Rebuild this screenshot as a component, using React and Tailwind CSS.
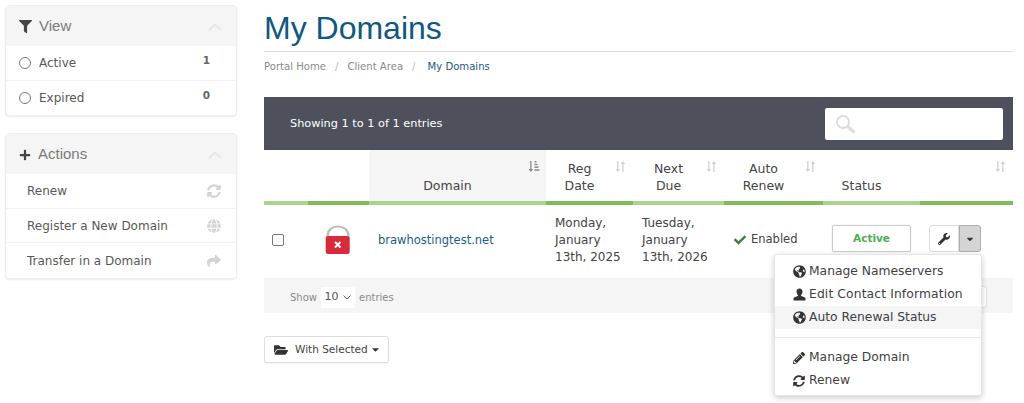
import React from "react";
import { FaFilter, FaPlus, FaSyncAlt, FaGlobe, FaShare, FaPencilAlt, FaWrench, FaCheck, FaFolderOpen, FaGlobeAmericas, FaCaretDown } from "react-icons/fa";

const Chevron = () => (
  <svg width="14" height="8" viewBox="0 0 14 8" fill="none" stroke="#e6e6e6" strokeWidth="2" className="shrink-0">
    <path d="M1 7l6-5.500L13 7" />
  </svg>
);

const SortIcon = ({ active }) => (
  <svg width="12" height="13" viewBox="0 0 12 12" fill={active ? "#8a8a8a" : "#d2d2d2"}>
    <path d="M2.200 0.500h1.300v8h1.700L2.850 11.500 0.500 8.500h1.700z" />
    {active ? (
      <path d="M6.500 0.500h2v1.500h-2zM6.500 3.200h3v1.500h-3zM6.500 6h4v1.500h-4zM6.500 8.800h5v1.500h-5z" />
    ) : (
      <path d="M8.500 11.500h-1.300v-8H5.500L7.850 0.500 10.200 3.500H8.500z" />
    )}
  </svg>
);

const Lock = () => (
  <svg width="26" height="30" viewBox="0 0 26 30">
    <path d="M2.500 13V11C2.500 4.800 7.500 1.500 13 1.500S23.500 4.800 23.500 11V13" fill="none" stroke="#bdbdbd" strokeWidth="2.200" />
    <rect x="0.700" y="11" width="24" height="18" rx="2.500" fill="#d9293a" />
    <path d="M10 17l5.500 5.500M15.500 17l-5.500 5.500" stroke="#fff" strokeWidth="2" />
  </svg>
);

const UserIcon = () => (
  <svg width="13" height="13" viewBox="0 0 13 13" fill="#333333">
    <path d="M6.500 0.500c1.900 0 3 1.400 3 3.300 0 1.300-.6 2.500-1.400 3.100v1.200c1.800.6 4 1.200 4.400 2.400v2H.5v-2c.4-1.200 2.600-1.800 4.400-2.400V6.900C4.100 6.300 3.500 5.100 3.500 3.800c0-1.900 1.100-3.300 3-3.300z" />
  </svg>
);

const Panel = ({ icon, title, gap, children }) => (
  <div className="w-[232px] rounded border border-[#eeeeee] bg-white shadow-[0_1px_2px_rgba(0,0,0,0.08)] overflow-hidden">
    <div className={`h-[40px] pt-[1px] bg-[#f5f5f5] flex items-center pl-[13px] pr-[14px] ${gap}`}>
      {icon}
      <span className="flex-1 font-['Liberation_Sans',sans-serif] text-[15px] text-[#7a7a7a]">{title}</span>
      <Chevron />
    </div>
    {children}
  </div>
);

const Row = ({ children, last }) => (
  <div className={`h-[34.5px] pt-[1px] flex items-center text-[12px] text-[#585858] ${last ? "" : "border-b border-[#f3f3f3]"}`}>
    {children}
  </div>
);

const HeadCell = ({ bg, bar, icon, className = "", children }) => (
  <div className={`relative h-[55px] border-b-[4px] ${bar} ${bg || ""} flex flex-col items-center justify-end pb-[7px] text-[12.5px] leading-[17px] text-[#444444] ${className}`}>
    {children}
    {icon && <span className="absolute top-[10px] right-[6px]">{icon}</span>}
  </div>
);

const L = "border-[#a8d48c]";
const D = "border-[#7fbd5c]";

const MenuItem = ({ icon, label, hover, wide }) => (
  <div className={`h-[23px] flex items-center pl-[17px] gap-[3px] text-[12.3px] text-[#3f3f3f] ${hover ? "bg-[#f5f5f5]" : ""}`}>
    <span className="w-[14px] flex justify-center text-[#333333]">{icon}</span>
    <span className={`whitespace-nowrap ${wide ? "tracking-[0.13px]" : ""}`}>{label}</span>
  </div>
);

export default function App() {
  return (
    <div className="relative w-[1024px] h-[403px] overflow-hidden bg-white font-['DejaVu_Sans',sans-serif] flex items-start pt-[5px] pl-[5px] gap-[27px]">
      <aside className="w-[232px] flex flex-col gap-[17px] shrink-0">
        <Panel icon={<FaFilter size={13} className="text-[#444444]" />} title="View" gap="gap-[7px]">
          <Row>
            <span className="w-[12px] h-[12px] ml-[13px] mr-[8px] rounded-full border border-[#777777]" />
            <span className="flex-1">Active</span>
            <span className="mr-[26px] -mt-[4px] text-[10.5px] font-bold text-[#666666]">1</span>
          </Row>
          <Row last>
            <span className="w-[12px] h-[12px] ml-[13px] mr-[8px] rounded-full border border-[#777777]" />
            <span className="flex-1">Expired</span>
            <span className="mr-[26px] -mt-[4px] text-[10.5px] font-bold text-[#666666]">0</span>
          </Row>
        </Panel>
        <Panel icon={<FaPlus size={12} className="text-[#444444]" />} title="Actions" gap="gap-[7px]">
          <Row>
            <span className="flex-1 pl-[21px]">Renew</span>
            <FaSyncAlt size={14} className="mr-[15px] text-[#d4d4d4]" />
          </Row>
          <Row>
            <span className="flex-1 pl-[21px]">Register a New Domain</span>
            <FaGlobe size={14} className="mr-[15px] text-[#d4d4d4]" />
          </Row>
          <Row last>
            <span className="flex-1 pl-[21px]">Transfer in a Domain</span>
            <FaShare size={14} className="mr-[15px] text-[#d4d4d4]" />
          </Row>
        </Panel>
      </aside>

      <main className="w-[749px] shrink-0">
        <h1 className="h-[41px] -mt-[5px] pt-[10px] border-b border-[#dddddd] box-content font-['Liberation_Sans',sans-serif] text-[32px] leading-[37px] text-[#0f5880]">My Domains</h1>
        <nav className="h-[45px] pt-[8px] flex items-start text-[10.1px] leading-[14px] text-[#8a8a8a]">
          <span>Portal Home</span>
          <span className="mx-[9px] text-[#bbbbbb]">/</span>
          <span>Client Area</span>
          <span className="mx-[9px] text-[#bbbbbb]">/</span>
          <span className="ml-[3px] text-[#1d5a80]">My Domains</span>
        </nav>

        <div className="h-[53px] bg-[#4e515c] flex items-center justify-between pl-[26px] pr-[10px] text-[11.3px] text-white">
          <span className="mt-[2px]">Showing 1 to 1 of 1 entries</span>
          <div className="w-[178px] h-[32px] bg-white rounded-[2px] flex items-center pl-[10px]">
            <svg width="22" height="20" viewBox="0 0 22 20" fill="none" stroke="#dddddd" strokeWidth="1.800">
              <circle cx="8" cy="8" r="6" />
              <path d="M12.500 12.500l7 6" strokeWidth="3" />
            </svg>
          </div>
        </div>

        <div className="grid grid-cols-[44px_61px_177px_87px_91px_99px_97px_93px]">
          <HeadCell bar={L} />
          <HeadCell bar={D} />
          <HeadCell bar={L} bg="bg-[#f5f5f5]" className="pr-[20px]" icon={<SortIcon active />}>Domain</HeadCell>
          <HeadCell bar={D} className="pr-[20px]" icon={<SortIcon />}><span>Reg</span><span>Date</span></HeadCell>
          <HeadCell bar={L} className="pr-[20px]" icon={<SortIcon />}><span>Next</span><span>Due</span></HeadCell>
          <HeadCell bar={D} className="pr-[20px]" icon={<SortIcon />}><span>Auto</span><span>Renew</span></HeadCell>
          <HeadCell bar={L} className="pr-[20px]">Status</HeadCell>
          <HeadCell bar={D} icon={<SortIcon />} />

          <div className="h-[73px] flex items-center pl-[8px] pb-[3px]">
            <span className="w-[12px] h-[12px] rounded-[2px] border border-[#777777] bg-white" />
          </div>
          <div className="h-[73px] flex items-center pl-[17px] pb-[4px]"><Lock /></div>
          <div className="h-[73px] flex items-center pl-[9px] pb-[2px] text-[11.5px] text-[#1d5f80]">brawhostingtest.net</div>
          <div className="h-[73px] flex flex-col justify-center pl-[9px] pb-[3px] text-[12px] leading-[17px] text-[#444444]">
            <span>Monday,</span><span>January</span><span>13th, 2025</span>
          </div>
          <div className="h-[73px] flex flex-col justify-center pl-[9px] pb-[3px] text-[12px] leading-[17px] text-[#444444]">
            <span>Tuesday,</span><span>January</span><span>13th, 2026</span>
          </div>
          <div className="h-[73px] flex items-center pl-[10px] pb-[3px] gap-[5px] text-[11.500px] text-[#444444]">
            <FaCheck size={12} className="text-[#3d7d45]" /><span>Enabled</span>
          </div>
          <div className="h-[73px] flex items-center pl-[9px] pb-[6px]">
            <span className="w-[79px] h-[27px] flex items-center justify-center rounded-[2px] border border-[#cccccc] shadow-[0_0_1px_rgba(0,0,0,0.3)] text-[10.500px] font-bold text-[#4caf50]">Active</span>
          </div>
          <div className="h-[73px] flex items-center pl-[9px] pb-[6px]">
            <span className="w-[30px] h-[27px] flex items-center justify-center rounded-l-[3px] border border-[#dddddd] bg-white"><FaWrench size={12} className="text-[#333333]" /></span>
            <span className="w-[22px] h-[27px] flex items-center justify-center rounded-r-[3px] border border-[#adadad] bg-[#d4d4d4]"><FaCaretDown size={10} className="text-[#333333]" /></span>
          </div>
        </div>

        <div className="h-[35px] pt-[4px] bg-[#f5f5f5] flex items-center pl-[26px] pr-[26px] text-[10px] text-[#8a8a8a]">
          <span>Show</span>
          <span className="mx-[4px] w-[34px] h-[21px] bg-white rounded-[2px] flex items-center justify-center gap-[5px] text-[11px] text-[#555555]">
            10
            <svg width="8" height="5" viewBox="0 0 8 5" fill="none" stroke="#666666" strokeWidth="1"><path d="M0.500 0.500L4 4l3.500-3.500" /></svg>
          </span>
          <span className="flex-1">entries</span>
          <span className="w-[30px] h-[22px] -mt-[2px] bg-white rounded-r-[3px] border border-[#e3e3e3]" />
        </div>

        <button className="mt-[23px] w-[125px] h-[27px] flex items-center pl-[9px] gap-[7px] rounded-[3px] border border-[#dddddd] bg-white shadow-[0_1px_1px_rgba(0,0,0,0.05)] text-[10.500px] text-[#444444]">
          <FaFolderOpen size={14} className="text-[#333333]" />
          <span>With Selected</span>
          <FaCaretDown size={11} className="-ml-[5px] text-[#333333]" />
        </button>
      </main>

      <div className="absolute left-[774px] top-[254px] w-[208px] h-[142px] rounded-[3px] bg-white border border-[#e5e5e5] shadow-[0_2px_6px_rgba(0,0,0,0.2)] pt-[5px]">
        <MenuItem icon={<FaGlobeAmericas size={13} />} label="Manage Nameservers" />
        <MenuItem icon={<UserIcon />} label="Edit Contact Information" wide />
        <MenuItem icon={<FaGlobeAmericas size={13} />} label="Auto Renewal Status" hover />
        <div className="my-[8px] border-t border-[#e5e5e5]" />
        <MenuItem icon={<FaPencilAlt size={12} />} label="Manage Domain" />
        <MenuItem icon={<FaSyncAlt size={12} />} label="Renew" />
      </div>
    </div>
  );
}
